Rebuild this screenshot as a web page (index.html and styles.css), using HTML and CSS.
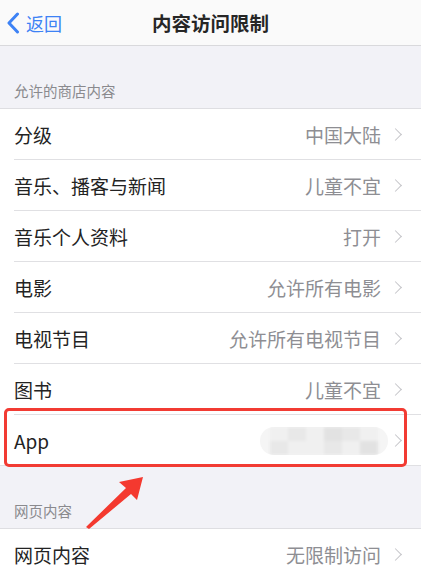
FILE: index.html
```html
<!DOCTYPE html>
<html lang="zh-CN">
<head>
<meta charset="utf-8">
<title>内容访问限制</title>
<link rel="stylesheet" href="styles.css">
</head>
<body>
<div class="screen">
  <header class="nav">
    <div class="back">
      <svg class="back-icon" width="14" height="22" viewBox="0 0 14 22"><path d="M11.5 2 L3 11 L11.5 20" fill="none" stroke="#3d82f5" stroke-width="3" stroke-linecap="round" stroke-linejoin="round"/></svg>
      <span>返回</span>
    </div>
    <div class="title">内容访问限制</div>
  </header>

  <div class="group-head">允许的商店内容</div>
  <ul class="group">
    <li class="row"><span class="label">分级</span><span class="value">中国大陆</span><span class="chev"></span></li>
    <li class="row"><span class="label">音乐、播客与新闻</span><span class="value">儿童不宜</span><span class="chev"></span></li>
    <li class="row"><span class="label">音乐个人资料</span><span class="value">打开</span><span class="chev"></span></li>
    <li class="row"><span class="label">电影</span><span class="value">允许所有电影</span><span class="chev"></span></li>
    <li class="row"><span class="label">电视节目</span><span class="value">允许所有电视节目</span><span class="chev"></span></li>
    <li class="row"><span class="label">图书</span><span class="value">儿童不宜</span><span class="chev"></span></li>
    <li class="row last"><span class="label">App</span><span class="value"></span><span class="chev"></span></li>
  </ul>

  <div class="group-head second">网页内容</div>
  <ul class="group">
    <li class="row last"><span class="label">网页内容</span><span class="value">无限制访问</span><span class="chev"></span></li>
  </ul>

  <div class="blur">
    <div class="pix">
      <i class="p1"></i><i class="p2"></i><i class="p1"></i><i class="p3"></i><i class="p2"></i><i class="p1"></i>
      <i class="p2"></i><i class="p1"></i><i class="p1"></i><i class="p2"></i><i class="p1"></i><i class="p3"></i>
    </div>
  </div>
  <div class="highlight"></div>
  <svg class="arrow" width="421" height="577" viewBox="0 0 421 577">
    <polygon points="86,527 126,488 119,482 143,477 137,500 131,494 89,529" fill="#f4392f"/>
  </svg>
</div>
</body>
</html>
```

FILE: styles.css
```css
* { box-sizing: border-box; }
html, body { margin: 0; padding: 0; }
body {
  background: #f2f2f7;
  font-family: "Noto Sans CJK SC", "Noto Sans", sans-serif;
  color: #222;
}
.screen {
  position: relative;
  width: 421px;
  height: 577px;
  overflow: hidden;
  background: #f2f2f7;
}
.nav {
  position: relative;
  height: 46px;
  background: #fafafa;
  border-bottom: 1px solid #d9d9dc;
  display: flex;
  align-items: center;
  justify-content: center;
}
.back {
  position: absolute;
  left: 6px;
  top: 0;
  height: 45px;
  display: flex;
  align-items: center;
  gap: 6px;
  color: #3d82f5;
  font-size: 18px;
}
.back-icon { display: block; }
.title {
  font-size: 19.5px;
  font-weight: 700;
  color: #262626;
  letter-spacing: 0;
}
.group-head {
  height: 62px;
  padding: 0 14px 7px;
  display: flex;
  align-items: flex-end;
  font-size: 14.5px;
  color: #8a8a8e;
}
.group-head.second {
  height: 62px;
}
.group {
  list-style: none;
  margin: 0;
  padding: 0;
  background: #fff;
  border-top: 1px solid #dedee2;
}
.row {
  height: 51px;
  margin-left: 14px;
  padding-right: 19px;
  border-bottom: 1px solid #e0e0e3;
  display: flex;
  align-items: center;
  font-size: 19px;
}
.row.last {
  margin-left: 0;
  padding-left: 14px;
}
.label {
  flex: 1;
  color: #232323;
}
.value {
  color: #8e8e93;
  margin-right: 10px;
}
.chev {
  width: 9px;
  height: 9px;
  border-top: 1.6px solid #c5c5c9;
  border-right: 1.6px solid #c5c5c9;
  transform: rotate(45deg);
  margin-right: 2px;
}
.blur {
  position: absolute;
  left: 260px;
  top: 427px;
  width: 128px;
  height: 28px;
  border-radius: 14px;
  background: #f5f5f5;
  overflow: hidden;
}
.pix {
  position: absolute;
  left: 10px;
  top: 0;
  width: 108px;
  height: 28px;
  display: grid;
  grid-template-columns: repeat(6, 1fr);
  grid-template-rows: repeat(2, 1fr);
  filter: blur(1.5px);
}
.pix i { display: block; }
.p1 { background: #f0f0f0; }
.p2 { background: #e8e8e8; }
.p3 { background: #e2e2e2; }
.highlight {
  position: absolute;
  left: 4px;
  top: 408px;
  width: 403px;
  height: 59px;
  border: 3px solid #f23b33;
  border-radius: 5px;
}
.arrow {
  position: absolute;
  left: 0;
  top: 0;
}
```
